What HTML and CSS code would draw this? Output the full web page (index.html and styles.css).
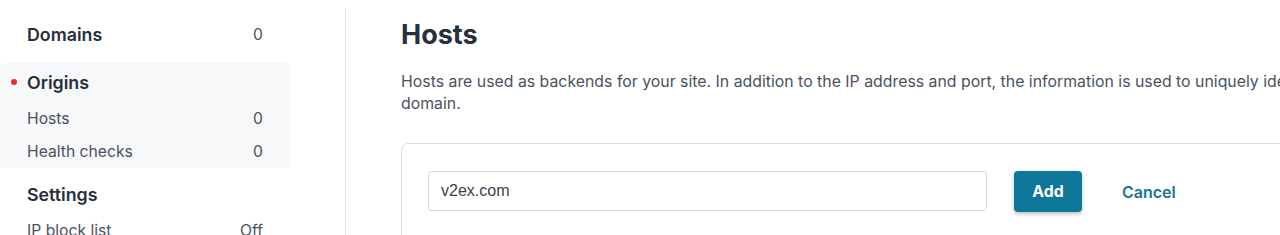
FILE: index.html
```html
<!DOCTYPE html>
<html lang="en">
<head>
<meta charset="utf-8">
<title>Hosts</title>
<link rel="stylesheet" href="styles.css">
</head>
<body>
<div class="layout">
  <aside class="sidebar">
    <div class="nav-row nav-head">
      <span>Domains</span><span class="count">0</span>
    </div>
    <div class="nav-group active">
      <div class="nav-row nav-head">
        <span class="dot"></span><span>Origins</span>
      </div>
      <div class="nav-row nav-item"><span>Hosts</span><span class="count">0</span></div>
      <div class="nav-row nav-item"><span>Health checks</span><span class="count">0</span></div>
    </div>
    <div class="nav-row nav-head settings">
      <span>Settings</span>
    </div>
    <div class="nav-row nav-item"><span>IP block list</span><span class="count">Off</span></div>
  </aside>
  <main class="main">
    <h1 class="title">Hosts</h1>
    <p class="desc">Hosts are used as backends for your site. In addition to the IP address and port, the information is used to uniquely identify your domain.</p>
    <div class="card">
      <div class="form-row">
        <input class="field" type="text" value="v2ex.com">
        <button class="btn-add">Add</button>
        <button class="btn-cancel">Cancel</button>
      </div>
    </div>
  </main>
</div>
</body>
</html>
```

FILE: styles.css
```css
* { box-sizing: border-box; }
html, body { margin: 0; padding: 0; background: #fff; }
body {
  font-family: Inter, "Noto Sans", sans-serif;
  color: #2d3748;
  overflow: hidden;
  height: 235px;
}
.layout {
  display: flex;
  align-items: flex-start;
}
.sidebar {
  width: 346px;
  flex: 0 0 346px;
  margin-top: 8px;
  padding-top: 13px;
  padding-right: 55px;
  border-right: 1px solid #e2e6ea;
  height: 227px;
  overflow: hidden;
}
.nav-row {
  display: flex;
  align-items: center;
  justify-content: space-between;
  padding: 0 27px;
  position: relative;
}
.nav-head {
  font-size: 17.8px;
  font-weight: 600;
  color: #272f3a;
  height: 26px;
}
.nav-item {
  font-size: 15.7px;
  color: #4a5260;
  height: 33px;
}
.count {
  font-size: 15.7px;
  font-weight: 400;
  color: #4a5260;
}
.nav-group {
  margin-top: 16px;
  background: #f6f8fa;
  border-radius: 5px;
  padding: 6px 0 0;
  height: 105px;
}
.nav-group .nav-head { margin-bottom: 7px; justify-content: flex-start; }
.dot {
  position: absolute;
  left: 11px;
  top: 10px;
  width: 6px;
  height: 6px;
  border-radius: 50%;
  background: #ee2a2f;
}
.settings { margin-top: 13px; margin-bottom: 7px; }
.main {
  flex: 1;
  padding-left: 55px;
  min-width: 0;
}
.title {
  margin: 17px 0 0;
  font-size: 27px;
  line-height: 36px;
  font-weight: 700;
  color: #27303c;
}
.desc {
  margin: 18px 0 0;
  font-size: 15.85px;
  line-height: 22px;
  color: #4a5260;
  width: 1010px;
}
.card {
  margin-top: 28px;
  border: 1px solid #d8dde3;
  border-radius: 7px;
  width: 920px;
  height: 120px;
  padding: 27px 26px;
}
.form-row {
  display: flex;
  align-items: flex-start;
}
.field {
  width: 559px;
  height: 40px;
  border: 1px solid #d5dae0;
  border-radius: 3px;
  padding: 0 12px;
  font-family: "Liberation Sans", Arial, sans-serif;
  font-size: 16px;
  color: #3b424d;
  outline: none;
}
.btn-add {
  margin-left: 27px;
  width: 68px;
  height: 41px;
  border: none;
  border-radius: 4px;
  background: #0f7799;
  color: #fff;
  font-family: Inter, sans-serif;
  font-size: 15.8px;
  font-weight: 700;
  box-shadow: 0 2px 4px rgba(0,0,0,0.25);
}
.btn-cancel {
  margin-left: 27px;
  height: 41px;
  background: none;
  border: none;
  padding: 0 13px;
  color: #1b7399;
  font-family: Inter, sans-serif;
  font-size: 16px;
  font-weight: 600;
}
```
